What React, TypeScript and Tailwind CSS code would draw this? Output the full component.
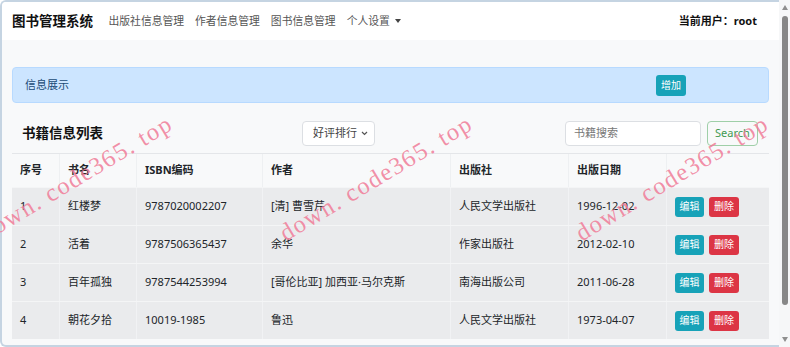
import React from "react";

type Book = {
  id: number;
  title: string;
  isbn: string;
  author: string;
  publisher: string;
  date: string;
};

const books: Book[] = [
  { id: 1, title: "红楼梦", isbn: "9787020002207", author: "[清] 曹雪芹", publisher: "人民文学出版社", date: "1996-12-02" },
  { id: 2, title: "活着", isbn: "9787506365437", author: "余华", publisher: "作家出版社", date: "2012-02-10" },
  { id: 3, title: "百年孤独", isbn: "9787544253994", author: "[哥伦比亚] 加西亚·马尔克斯", publisher: "南海出版公司", date: "2011-06-28" },
  { id: 4, title: "朝花夕拾", isbn: "10019-1985", author: "鲁迅", publisher: "人民文学出版社", date: "1973-04-07" },
];

const navLinks = ["出版社信息管理", "作者信息管理", "图书信息管理"];

const columns = [
  { label: "序号", width: "w-[47px]" },
  { label: "书名", width: "w-[77px]" },
  { label: "ISBN编码", width: "w-[126px]" },
  { label: "作者", width: "w-[188px]" },
  { label: "出版社", width: "w-[118px]" },
  { label: "出版日期", width: "w-[98px]" },
  { label: "", width: "w-[103px]" },
];

const watermarkLefts = ["left-[-34px]", "left-[266px]", "left-[562px]"];

function Scrollbar() {
  return (
    <div className="flex w-[11px] shrink-0 flex-col items-center bg-[#f6f7f8]">
      <div className="mt-[5px] h-0 w-0 border-x-[3px] border-b-[5px] border-x-transparent border-b-[#8f8f8f]" />
      <div className="mt-[6px] h-[289px] w-[6px] rounded-full bg-[#878787]" />
      <div className="mt-auto mb-[5px] h-0 w-0 border-x-[3px] border-t-[5px] border-x-transparent border-t-[#8f8f8f]" />
    </div>
  );
}

function Navbar() {
  return (
    <nav className="flex h-[38px] items-center bg-white pl-[10px] pr-[22px]">
      <span className="text-[13.5px] font-bold text-[#111]">图书管理系统</span>
      <div className="ml-[10px] flex items-center">
        {navLinks.map((link) => (
          <span key={link} className="px-[5.5px] text-[10.8px] text-[#555]">
            {link}
          </span>
        ))}
        <span className="flex items-center gap-[5px] px-[5.5px] text-[10.8px] text-[#555]">
          个人设置
          <span className="h-0 w-0 border-x-[3.5px] border-t-[4px] border-x-transparent border-t-[#444]" />
        </span>
      </div>
      <span className="ml-auto text-[11px] font-bold text-[#111]">当前用户：root</span>
    </nav>
  );
}

function ActionButtons() {
  return (
    <div className="flex gap-[5px]">
      <span className="flex h-[20px] w-[29px] items-center justify-center rounded-[3px] bg-[#17a2b8] text-[10px] text-white">
        编辑
      </span>
      <span className="flex h-[20px] w-[30px] items-center justify-center rounded-[3px] bg-[#dc3545] text-[10px] text-white">
        删除
      </span>
    </div>
  );
}

function BookTable() {
  return (
    <div className="mt-[7px] flex flex-col border-t border-[#e4e6e9] text-[11px] text-[#212529]">
      <div className="flex h-[33px] bg-[#f8f9fa] font-bold">
        {columns.map((col, i) => (
          <div
            key={i}
            className={`${col.width} flex items-center border-l border-[#eef0f2] pl-[8px] first:border-l-0`}
          >
            {col.label}
          </div>
        ))}
      </div>
      {books.map((book) => {
        const cells = [book.id, book.title, book.isbn, book.author, book.publisher, book.date];
        return (
          <div key={book.id} className="flex h-[38px] border-t border-[#f4f5f6] bg-[#eaebed]">
            {cells.map((cell, i) => (
              <div
                key={i}
                className={`${columns[i].width} flex items-center whitespace-nowrap border-l border-[#f1f2f4] pl-[8px] first:border-l-0`}
              >
                {cell}
              </div>
            ))}
            <div className={`${columns[6].width} flex items-center border-l border-[#f1f2f4] pl-[8px]`}>
              <ActionButtons />
            </div>
          </div>
        );
      })}
    </div>
  );
}

export default function App() {
  return (
    <div className="relative flex h-[347px] w-[790px] overflow-hidden bg-white font-['Noto_Sans','Noto_Sans_CJK_SC',sans-serif]">
      <div className="flex flex-1 flex-col overflow-hidden rounded-l-[6px] border-2 border-r-0 border-[#c5d4e2] bg-[#f8f9fa]">
        <Navbar />
        <main className="flex flex-col px-[10px] pt-[27px]">
          <div className="flex h-[36px] items-center rounded-[4px] border border-[#b8daff] bg-[#cce5ff] pl-[12px]">
            <span className="w-[631px] text-[11px] text-[#1a4a76]">信息展示</span>
            <span className="flex h-[21px] w-[30px] items-center justify-center rounded-[3px] bg-[#17a2b8] text-[10px] text-white">
              增加
            </span>
          </div>

          <div className="mt-[18px] flex h-[25px] items-center">
            <h2 className="w-[290px] pl-[10px] text-[13.5px] font-bold text-[#111]">书籍信息列表</h2>
            <div className="flex h-[25px] w-[73px] items-center justify-between rounded-[4px] border border-[#dcdfe3] bg-white pl-[10px] pr-[6px] text-[11px] text-[#444]">
              好评排行
              <svg width="7" height="5" viewBox="0 0 7 5" fill="none" stroke="#555" strokeWidth="1.2">
                <path d="M1 1l2.5 2.5L6 1" />
              </svg>
            </div>
            <div className="ml-auto flex h-[25px] w-[136px] items-center rounded-[4px] border border-[#dcdfe3] bg-white pl-[8px] text-[11px] text-[#777]">
              书籍搜索
            </div>
            <div className="ml-[6px] mr-[11px] flex h-[25px] w-[51px] items-center justify-center rounded-[4px] border border-[#9fcfa8] text-[11px] text-[#3f9a52]">
              Search
            </div>
          </div>

          <BookTable />
        </main>
      </div>
      <Scrollbar />

      {watermarkLefts.map((left) => (
        <span
          key={left}
          className={`pointer-events-none absolute top-[160px] ${left} -rotate-[31deg] whitespace-nowrap font-['Liberation_Serif',serif] text-[24.5px] tracking-[1.5px] text-[#f07c98]/85`}
        >
          down. code365. top
        </span>
      ))}
    </div>
  );
}
